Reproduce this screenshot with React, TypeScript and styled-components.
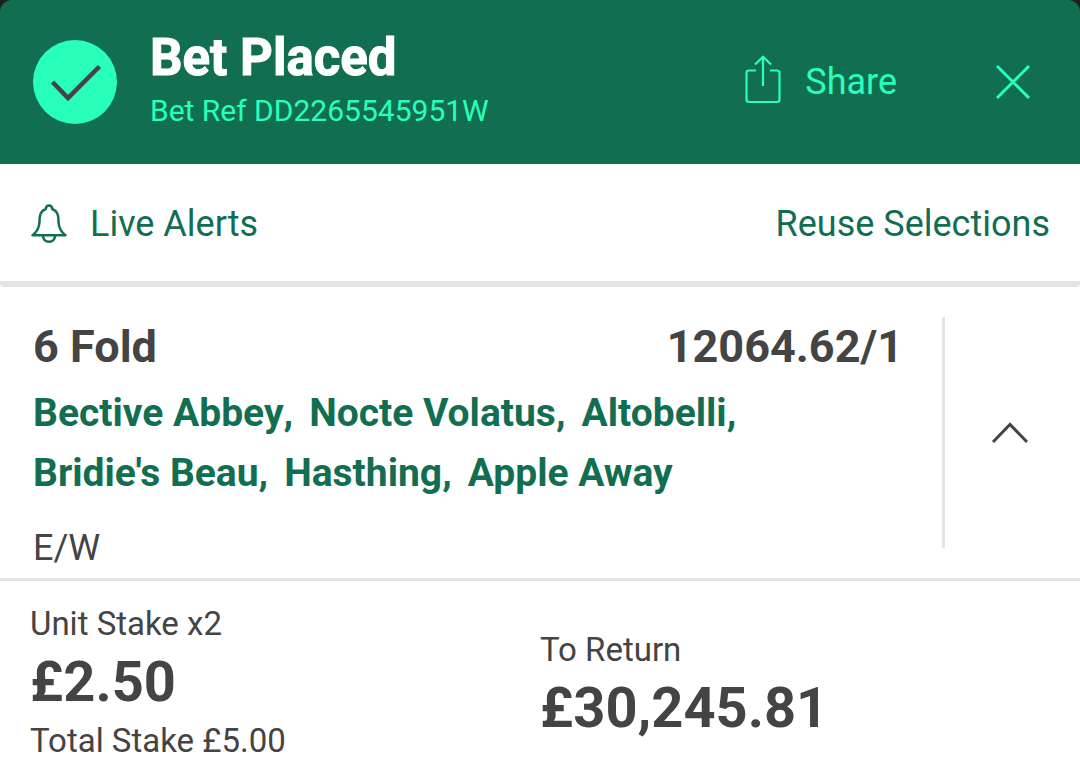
import React from "react";
import styled, { createGlobalStyle } from "styled-components";

const GlobalStyle = createGlobalStyle`
  * { box-sizing: border-box; }
  body { margin: 0; background: #ffffff; color: #444444; font-family: Roboto, "Liberation Sans", sans-serif; }
  h1, h2, p, ul { margin: 0; padding: 0; }
`;

const TextButton = styled.button<{ $gap?: number }>`
  display: flex;
  align-items: center;
  gap: ${(p) => p.$gap ?? 0}px;
  border: 0;
  padding: 0;
  background: none;
  color: inherit;
  font: 400 36px/40px Roboto, "Liberation Sans", sans-serif;
  cursor: pointer;
`;

const HeaderBack = styled.div`
  background: #1f1f1f;
`;

const Header = styled.header`
  display: flex;
  align-items: center;
  height: 164px;
  padding: 0 49px 0 32px;
  background: #126e51;
  color: #28ffbb;
  border-radius: 12px 12px 0 0;
`;

const HeaderText = styled.div`
  flex: 1;
  margin-left: 32px;
  padding-bottom: 6px;
`;

const Title = styled.h1`
  color: #ffffff;
  font-size: 51px;
  line-height: 64px;
  font-weight: 700;
  -webkit-text-stroke: 1px #ffffff;
`;

const Reference = styled.p`
  font-size: 30px;
  line-height: 42px;
`;

const HeaderActions = styled.div`
  display: flex;
  align-items: center;
  gap: 98px;
`;

const Toolbar = styled.nav`
  display: flex;
  align-items: center;
  justify-content: space-between;
  height: 123px;
  padding: 2px 30px 0;
  border-bottom: 6px solid #e4e4e4;
  border-radius: 0 0 4px 4px;
  color: #126e51;
`;

const Bet = styled.section`
  display: flex;
  align-items: stretch;
  border-bottom: 3px solid #e4e4e4;
`;

const BetDetails = styled.div`
  flex: 1;
  padding: 30px 39px 9px 33px;
`;

const BetHeading = styled.div`
  display: flex;
  justify-content: space-between;
  font-size: 45px;
  line-height: 60px;
  font-weight: 700;
`;

const BetName = styled.h2`
  font-size: inherit;
  font-weight: inherit;
`;

const Selections = styled.ul`
  display: flex;
  flex-wrap: wrap;
  column-gap: 16px;
  max-width: 740px;
  margin-top: 6px;
  list-style: none;
  color: #126e51;
  font-size: 39px;
  line-height: 60px;
  font-weight: 700;
`;

const Selection = styled.li`
  display: flex;
`;

const EachWay = styled.p`
  margin-top: 24px;
  font-size: 36px;
  line-height: 42px;
`;

const Collapse = styled.div`
  display: flex;
  align-items: center;
  justify-content: center;
  width: 138px;
  margin: 30px 0;
  padding-right: 5px;
  border-left: 3px solid #e4e4e4;
`;

const Summary = styled.section`
  display: grid;
  grid-template-columns: 1fr 1fr;
  align-items: center;
  padding-top: 22px;
`;

const Amounts = styled.div<{ $inset?: number; $drop?: number }>`
  padding-left: ${(p) => p.$inset ?? 0}px;
  padding-top: ${(p) => p.$drop ?? 0}px;
`;

const Label = styled.p`
  font-size: 33px;
  line-height: 42px;
`;

const Amount = styled.p`
  font-size: 56px;
  line-height: 75px;
  font-weight: 700;
`;

const selections = ["Bective Abbey", "Nocte Volatus", "Altobelli", "Bridie's Beau", "Hasthing", "Apple Away"];

const CheckBadge = () => (
  <svg width="86" height="86" viewBox="0 0 86 86" aria-hidden="true">
    <circle cx="43" cy="43" r="42" fill="#28ffbb" />
    <path d="M20.5 43 36 59 67.5 27.5" fill="none" stroke="#444444" strokeWidth="4.5" />
  </svg>
);

const ShareIcon = () => (
  <svg width="38" height="54" viewBox="0 0 38 54" fill="none" stroke="currentColor" strokeWidth="2.2" aria-hidden="true">
    <path d="M12 15.5H5Q2.5 15.5 2.5 18V44.5Q2.5 47 5 47H33Q35.5 47 35.5 44.5V18Q35.5 15.5 33 15.5H26M19 31V2M11 9.5 19 1.8 27 9.5" />
  </svg>
);

const CloseIcon = () => (
  <svg width="36" height="36" viewBox="0 0 36 36" fill="none" stroke="currentColor" strokeWidth="3" aria-hidden="true">
    <path d="M2 2 34 34M34 2 2 34" />
  </svg>
);

const BellIcon = () => (
  <svg width="38" height="40" viewBox="0 0 38 40" fill="none" stroke="currentColor" strokeWidth="2.5" strokeLinejoin="round" aria-hidden="true">
    <path d="M2.5 31.3Q9 26.5 9.5 18C9.5 10 11 7 15.8 5Q16 1.5 19 1.5Q22 1.5 22.2 5C27 7 28.5 10 28.5 18Q29 26.5 35.5 31.3ZM13 32Q13.5 37.8 19 37.8Q24.5 37.8 25 32" />
  </svg>
);

const ChevronIcon = () => (
  <svg width="38" height="22" viewBox="0 0 38 22" fill="none" stroke="currentColor" strokeWidth="3" aria-hidden="true">
    <path d="M2 20 19 2.5 36 20" />
  </svg>
);

export default function App() {
  return (
    <main>
      <GlobalStyle />
      <HeaderBack>
        <Header>
          <CheckBadge />
          <HeaderText>
            <Title>Bet Placed</Title>
            <Reference>Bet Ref DD2265545951W</Reference>
          </HeaderText>
          <HeaderActions>
            <TextButton $gap={23}><ShareIcon />Share</TextButton>
            <TextButton aria-label="Close"><CloseIcon /></TextButton>
          </HeaderActions>
        </Header>
      </HeaderBack>
      <Toolbar>
        <TextButton $gap={22}><BellIcon />Live Alerts</TextButton>
        <TextButton>Reuse Selections</TextButton>
      </Toolbar>
      <Bet>
        <BetDetails>
          <BetHeading><BetName>6 Fold</BetName><span>12064.62/1</span></BetHeading>
          <Selections>
            {selections.map((name, i) => (
              <Selection key={name}>
                {name}
                {i < selections.length - 1 && <span>,</span>}
              </Selection>
            ))}
          </Selections>
          <EachWay>E/W</EachWay>
        </BetDetails>
        <Collapse>
          <TextButton aria-label="Collapse bet" aria-expanded="true"><ChevronIcon /></TextButton>
        </Collapse>
      </Bet>
      <Summary>
        <Amounts $inset={30}>
          <Label>Unit Stake x2</Label>
          <Amount>£2.50</Amount>
          <Label>Total Stake £5.00</Label>
        </Amounts>
        <Amounts $drop={9}>
          <Label>To Return</Label>
          <Amount>£30,245.81</Amount>
        </Amounts>
      </Summary>
    </main>
  );
}
